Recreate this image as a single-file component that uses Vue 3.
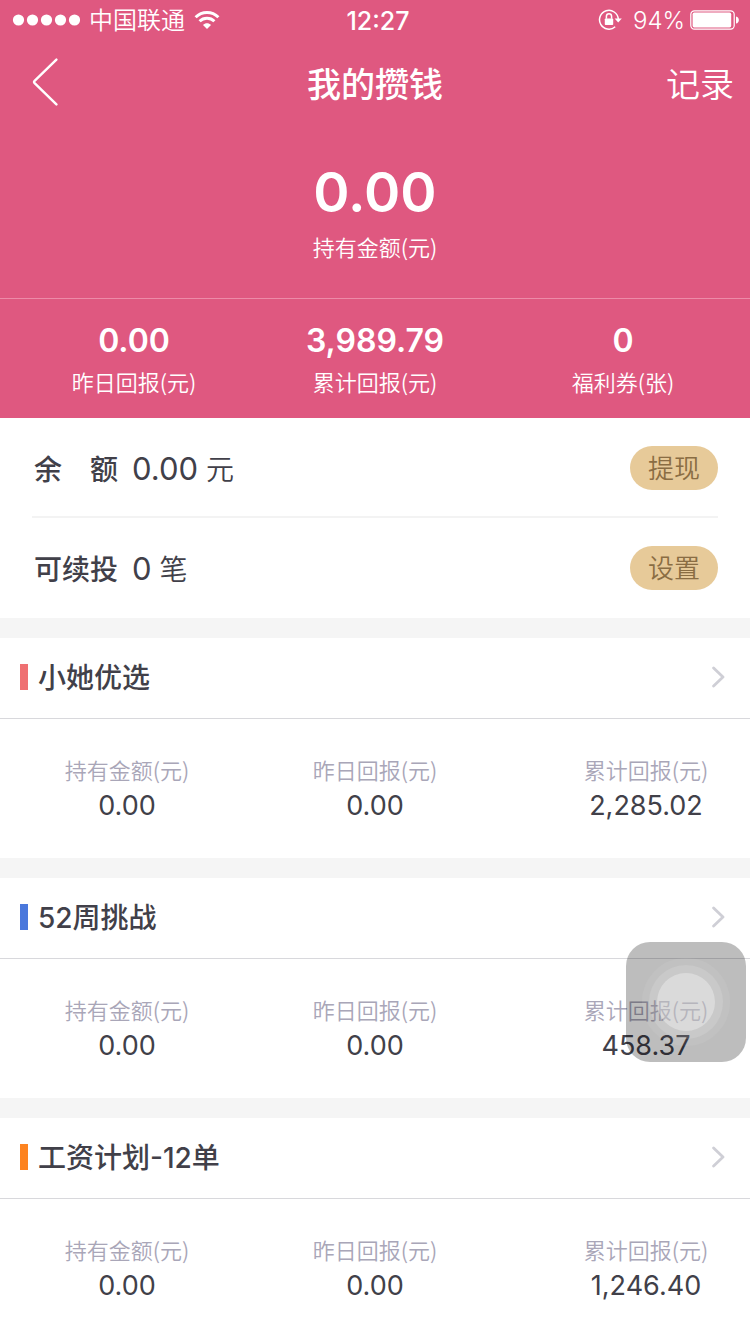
<script setup>
const totals = [
  { value: '0.00', label: '昨日回报(元)' },
  { value: '3,989.79', label: '累计回报(元)' },
  { value: '0', label: '福利券(张)' },
]

const accounts = [
  { name: '余　额', value: '0.00', unit: '元', action: '提现' },
  { name: '可续投', value: '0', unit: '笔', action: '设置' },
]

const labels = ['持有金额(元)', '昨日回报(元)', '累计回报(元)']

const plans = [
  { name: '小她优选', tone: 'coral', values: ['0.00', '0.00', '2,285.02'] },
  { name: '52周挑战', tone: 'blue', values: ['0.00', '0.00', '458.37'] },
  { name: '工资计划-12单', tone: 'orange', values: ['0.00', '0.00', '1,246.40'] },
]
</script>

<template>
  <div class="page">
    <header class="hero">
      <div class="status">
        <div class="carrier">
          <svg class="signal" width="68" height="12" viewBox="0 0 68 12" fill="#fff" aria-hidden="true">
            <circle v-for="n in 5" :key="n" :cx="n * 14 - 7.5" cy="6" r="5.6" />
          </svg>
          <span>中国联通</span>
          <svg class="wifi" width="26" height="20" viewBox="0 0 26 20" aria-hidden="true">
            <g fill="none" stroke="#fff" stroke-width="3">
              <path d="M1.6 7.2C8 .9 18 .9 24.4 7.2" />
              <path d="M5.6 11.3c4.1-4 10.7-4 14.8 0" />
            </g>
            <path d="M13 19l-4-4.1c2.2-2.2 5.8-2.2 8 0z" fill="#fff" />
          </svg>
        </div>
        <time class="clock">12:27</time>
        <div class="power">
          <svg class="lock" width="24" height="22" viewBox="0 0 24 22" aria-hidden="true">
            <path d="M17.2 17.8A9.4 9.4 0 1 1 20.3 10" fill="none" stroke="#fff" stroke-width="1.5" />
            <path d="M16.6 9.4h7.2l-3.6 4.2z" fill="#fff" />
            <rect x="6.8" y="9.4" width="8.4" height="6.6" rx=".8" fill="#fff" />
            <path d="M8.4 9.8V7.4a2.6 2.6 0 0 1 5.2 0v2.4" fill="none" stroke="#fff" stroke-width="1.5" />
          </svg>
          <span>94%</span>
          <svg class="battery" width="50" height="20" viewBox="0 0 50 20" aria-hidden="true">
            <rect x=".8" y=".8" width="43.4" height="18.4" rx="3.6" fill="none" stroke="#fff" stroke-width="1.2" />
            <rect x="2.6" y="2.6" width="38.6" height="14.8" rx="1.6" fill="#fff" />
            <path d="M46 6.4c3.8.8 3.8 6.4 0 7.2z" fill="#fff" />
          </svg>
        </div>
      </div>

      <nav class="nav">
        <button class="back" type="button" aria-label="返回">
          <svg width="26" height="48" viewBox="0 0 26 48" aria-hidden="true">
            <path d="M24.4 1.6L2.6 22.8q-1.2 1.2 0 2.4L24.4 46.4" fill="none" stroke="#fff" stroke-width="2.4" stroke-linecap="round" />
          </svg>
        </button>
        <h1 class="title">我的攒钱</h1>
        <a class="records" href="#">记录</a>
      </nav>

      <div class="holding">
        <strong class="amount">0.00</strong>
        <span class="caption">持有金额(元)</span>
      </div>

      <div class="totals">
        <div v-for="item in totals" :key="item.label" class="total">
          <strong class="figure">{{ item.value }}</strong>
          <span class="caption">{{ item.label }}</span>
        </div>
      </div>
    </header>

    <section class="accounts">
      <div v-for="item in accounts" :key="item.action" class="account">
        <span class="name">{{ item.name }}</span>
        <span class="number">{{ item.value }}</span>
        <span class="unit">{{ item.unit }}</span>
        <button class="pill" type="button">{{ item.action }}</button>
      </div>
    </section>

    <section v-for="plan in plans" :key="plan.name" class="plan">
      <a class="head" href="#">
        <i class="mark" :class="plan.tone"></i>
        <h2 class="plan-name">{{ plan.name }}</h2>
        <svg width="14" height="22" viewBox="0 0 14 22" aria-hidden="true">
          <path d="M1.6 2l9.4 9-9.4 9" fill="none" stroke="#cfcfd6" stroke-width="2.8" stroke-linecap="round" stroke-linejoin="round" />
        </svg>
      </a>
      <div class="details">
        <div v-for="(value, i) in plan.values" :key="i" class="detail">
          <span class="label">{{ labels[i] }}</span>
          <span class="value">{{ value }}</span>
        </div>
      </div>
    </section>

    <button class="touch" type="button" aria-label="辅助触控">
      <svg viewBox="0 0 120 120" aria-hidden="true">
        <g fill="#fff">
          <circle cx="60" cy="60" r="44" fill-opacity=".06" />
          <circle cx="60" cy="60" r="37" fill-opacity=".12" />
          <circle cx="60" cy="60" r="29" fill-opacity=".32" />
        </g>
      </svg>
    </button>
  </div>
</template>

<style>
body {
  background: #fff;
}
</style>

<style scoped>
.page {
  height: 100vh;
  overflow: hidden;
  background: #f5f5f5;
  color: #414049;
  font-family: Inter, "Noto Sans CJK SC", sans-serif;
}

button {
  padding: 0;
  border: 0;
  background: none;
  font-family: inherit;
}

a {
  color: inherit;
  text-decoration: none;
}

h1,
h2 {
  margin: 0;
}

svg {
  display: block;
}

.hero {
  background: #df5880;
  color: #fff;
}

.status {
  display: grid;
  grid-template-columns: 1fr auto 1fr;
  align-items: center;
  height: 40px;
  padding: 0 10px 0 12px;
  font-size: 24px;
  line-height: 36px;
}

.carrier,
.power {
  display: flex;
  align-items: center;
  font-weight: 350;
}

.carrier {
  gap: 9px;
}

.carrier span,
.power span,
.clock {
  padding-top: 2px;
}

.power {
  justify-content: flex-end;
  gap: 5px;
}

.lock {
  margin-right: 6px;
}

.clock {
  padding-left: 4px;
  font-size: 25px;
  font-weight: 500;
}

.nav {
  display: grid;
  grid-template-columns: 1fr auto 1fr;
  align-items: center;
  height: 84px;
  padding: 0 16px 0 32px;
}

.back {
  width: 26px;
}

.title {
  padding-right: 16px;
  font-size: 34px;
  font-weight: 500;
}

.records {
  justify-self: end;
  font-size: 34px;
  font-weight: 350;
}

.holding {
  display: flex;
  flex-direction: column;
  align-items: center;
  height: 174px;
  padding-top: 34px;
  box-sizing: border-box;
}

.amount {
  font-size: 55px;
  font-weight: 600;
  line-height: 68px;
}

.caption,
.label {
  font-family: "Noto Sans CJK SC", sans-serif;
  font-size: 22px;
  font-weight: 350;
  line-height: 32px;
}

.holding .caption {
  margin-top: 4px;
}

.totals {
  display: grid;
  grid-template-columns: repeat(3, 1fr);
  height: 120px;
  padding-top: 20px;
  border-top: 1px solid #ed8ba8;
  box-sizing: border-box;
}

.total,
.detail {
  display: flex;
  flex-direction: column;
  align-items: center;
}

.total:first-child {
  padding-left: 18px;
}

.total:last-child {
  padding-right: 4px;
}

.figure {
  margin-bottom: 2px;
  font-size: 32px;
  font-weight: 600;
  line-height: 44px;
}

.accounts {
  padding: 0 32px;
  background: #fff;
}

.account {
  display: flex;
  align-items: center;
  height: 100px;
  padding-left: 2px;
  box-sizing: border-box;
}

.account:first-child {
  padding-top: 2px;
  border-bottom: 2px solid #f3f3f3;
}

.name {
  font-size: 28px;
  font-weight: 500;
}

.number {
  margin: 0 8px 0 14px;
  font-size: 31px;
}

.unit {
  font-size: 28px;
  font-weight: 350;
}

.pill {
  width: 88px;
  height: 44px;
  margin-left: auto;
  border-radius: 22px;
  background: #e7ca99;
  color: #8a6d43;
  font-size: 26px;
  font-weight: 350;
  line-height: 46px;
}

.plan {
  margin-top: 20px;
  background: #fff;
}

.head {
  display: flex;
  align-items: center;
  height: 81px;
  padding: 0 24px 2px 20px;
  border-bottom: 1px solid #d8d8dc;
  box-sizing: border-box;
}

.mark {
  width: 8px;
  height: 26px;
  margin-right: 10px;
}

.coral {
  background: #ef7072;
}

.blue {
  background: #4a78dc;
}

.orange {
  background: #fd8320;
}

.plan-name {
  flex: 1;
  padding-bottom: 2px;
  font-size: 28px;
  font-weight: 500;
}

.details {
  display: grid;
  grid-template-columns: repeat(3, 1fr);
  height: 139px;
  padding-top: 34px;
  box-sizing: border-box;
}

.detail:first-child {
  padding-left: 4px;
}

.detail:last-child {
  padding-left: 42px;
}

.label {
  margin-bottom: 1px;
  color: #a9a6b8;
}

.value {
  font-size: 27px;
  line-height: 40px;
}

.touch {
  position: fixed;
  top: 942px;
  right: 4px;
  width: 120px;
  height: 120px;
  border-radius: 24px;
  background: rgba(0, 0, 0, .26);
}
</style>
